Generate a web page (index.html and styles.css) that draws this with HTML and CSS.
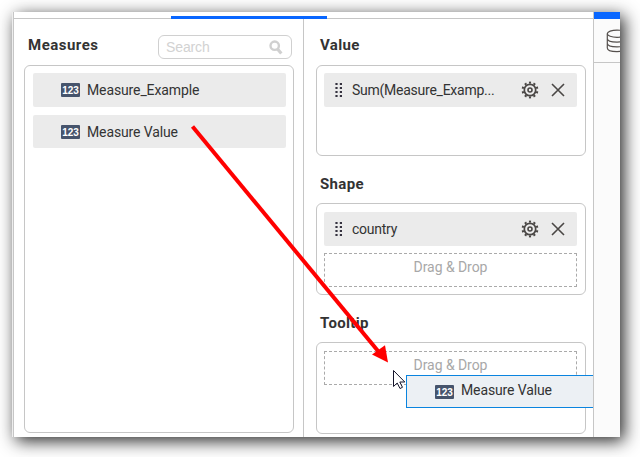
FILE: index.html
```html
<!DOCTYPE html>
<html lang="en">
<head>
<meta charset="utf-8">
<title>Data fields</title>
<link rel="stylesheet" href="styles.css">
</head>
<body>
<svg class="defs" width="0" height="0">
  <symbol id="gear" viewBox="0 0 18 18">
    <g fill="none" stroke="#4a4745">
      <circle cx="9" cy="9" r="5.7" stroke-width="1.7"/>
      <circle cx="9" cy="9" r="2" stroke-width="1.6"/>
      <circle cx="9" cy="9" r="7.4" stroke-width="2" pathLength="100" stroke-dasharray="4.5 5.5" stroke-dashoffset="2.25" transform="rotate(-90 9 9)"/>
    </g>
  </symbol>
  <symbol id="close" viewBox="0 0 14 14"><path d="M1 1l12 12M13 1L1 13" fill="none" stroke="#4a4745" stroke-width="1.6"/></symbol>
  <symbol id="grip" viewBox="0 0 7 14"><path d="M1.500 0v14M5.900 0v14" fill="none" stroke="#35323f" stroke-width="2.200" stroke-dasharray="2"/></symbol>
</svg>
<div class="window">
  <main class="main">
    <div class="tabs"><i class="active-tab"></i></div>
    <div class="columns">
      <section class="measures">
        <header class="measures-head">
          <h2>Measures</h2>
          <div class="search"><span>Search</span>
            <svg width="14" height="15" viewBox="0 0 14 15"><circle cx="5.700" cy="5.700" r="4.200" fill="none" stroke="#d0d0d0" stroke-width="2.400"/><path d="M8.300 8.800l4 4.700" stroke="#d0d0d0" stroke-width="3.200"/></svg>
          </div>
        </header>
        <div class="box list">
          <div class="item"><b class="badge">123</b>Measure_Example</div>
          <div class="item second"><b class="badge">123</b>Measure Value</div>
        </div>
      </section>
      <section class="fields">
        <h2>Value</h2>
        <div class="box value">
          <div class="field"><svg class="grip"><use href="#grip"/></svg><span>Sum(Measure_Examp...</span><svg class="gear"><use href="#gear"/></svg><svg class="close"><use href="#close"/></svg></div>
        </div>
        <h2>Shape</h2>
        <div class="box shape">
          <div class="field"><svg class="grip"><use href="#grip"/></svg><span>country</span><svg class="gear"><use href="#gear"/></svg><svg class="close"><use href="#close"/></svg></div>
          <div class="drop">Drag &amp; Drop</div>
        </div>
        <h2>Tooltip</h2>
        <div class="box tooltip">
          <div class="drop">Drag &amp; Drop</div>
        </div>
        <div class="dragged"><b class="badge">123</b><span>Measure Value</span></div>
      </section>
    </div>
  </main>
  <aside class="rail">
    <i class="rail-top"></i>
    <div class="rail-button">
      <svg width="22" height="24" viewBox="0 0 22 24"><g fill="none" stroke="#55504d" stroke-width="1.200"><ellipse cx="11" cy="4.700" rx="9.700" ry="3.600"/><path d="M1.300 4.700v14.300c0 4.800 19.400 4.800 19.400 0v-14.300M1.300 9.500c0 4.800 19.400 4.800 19.400 0M1.300 14.300c0 4.800 19.400 4.800 19.400 0"/></g></svg>
    </div>
  </aside>
</div>
<svg class="overlay" width="640" height="457">
  <path d="M192.500 126.500L378 351" stroke="#f00" stroke-width="4"/>
  <path d="M388 362.500L372 354.500L385 345.200z" fill="#f00"/>
  <path d="M393.500 370.500v16l3.700-3.500 2.800 5.500 2.500-1.200-2.700-5.300h5z" fill="#fff" stroke="#15152b"/>
</svg>
</body>
</html>
```
FILE: styles.css
```css
* { box-sizing: border-box; }
body { margin: 0; width: 640px; height: 457px; overflow: hidden; background: #fff; font: 14px/18px Roboto, "Liberation Sans", sans-serif; letter-spacing: -.12px; color: #333; padding: 12px 20px 20px 12px; }
.defs { position: absolute; }
.window { width: 608px; height: 425px; display: flex; background: #fff; border-left: 1px solid #eee; box-shadow: 4px 4px 16px rgba(0,0,0,.85); }
.main { width: 581px; border-left: 1px solid #c6c6c6; border-right: 1px solid #c6c6c6; overflow: hidden; }
.tabs { height: 7px; border-bottom: 1px solid #c6c6c6; padding: 4px 0 0 157px; }
.active-tab { display: block; width: 156px; height: 3px; background: #0866ff; position: relative; }
.columns { display: flex; height: 418px; }
.measures { width: 290px; border-right: 1px solid #c6c6c6; padding: 16px 9px 0 10px; }
.measures-head { display: flex; justify-content: space-between; height: 30px; }
h2 { margin: 0; font-size: 15px; line-height: 20px; font-weight: 700; letter-spacing: .5px; height: 30px; padding-left: 4px; color: #333; }
.search { width: 134px; height: 24px; margin-right: 2px; border: 1px solid #d0d0d0; border-radius: 6px; padding: 0 8px 0 7px; display: flex; align-items: center; justify-content: space-between; color: #d2d2d2; font: 14px "Liberation Sans", sans-serif; }
.box { border: 1px solid #c6c6c6; border-radius: 6px; width: 270px; padding: 7px 8px; height: 92px; }
.list { height: 368px; padding: 7px 7px 7px 8px; }
.item { width: 253px; height: 34px; margin-bottom: 8px; background: #ebebeb; border-radius: 2px; display: flex; align-items: center; padding-left: 28px; }
.item.second { height: 33px; }
.badge { width: 19px; height: 14px; margin-right: 7px; background: #46546c; border-radius: 1px; color: #fff; font: bold 10px/15px "Liberation Sans", sans-serif; letter-spacing: 0; text-align: center; }
.fields { width: 289px; position: relative; padding: 16px 0 0 12px; }
.fields h2 { letter-spacing: .35px; }
.fields .box { padding-left: 7px; }
.fields .value { height: 91px; }
.fields .box + h2 { margin-top: 18px; height: 29px; }
.fields .shape, .fields .tooltip { padding-top: 8px; }
.field { width: 253px; height: 34px; background: #ebebeb; border-radius: 2px; display: flex; align-items: center; padding: 0 12px 0 11px; }
.field span { flex: 1; padding-left: 10px; letter-spacing: -.25px; }
.grip { width: 7px; height: 14px; }
.gear { width: 18px; height: 18px; margin: -1px 12px 0 0; }
.close { width: 14px; height: 14px; }
.drop { width: 253px; height: 34px; border: 1px dashed #aaa; color: #a8a8a8; text-align: center; line-height: 27px; letter-spacing: -.05px; }
.field + .drop { margin-top: 7px; }
.dragged { position: absolute; left: 102px; top: 356px; width: 200px; height: 33px; background: #ecf0f4; border: 1px solid #0a84df; padding: 5px 0 0 28px; display: flex; }
.dragged .badge { margin-top: 4px; }
.rail { width: 26px; background: #fbfbfb; overflow: hidden; }
.rail-top { display: block; height: 7px; background: #0866ff; }
.rail-button { height: 44px; border-bottom: 1px solid #c6c6c6; padding: 10px 0 0 12px; }
.overlay { position: absolute; left: 0; top: 0; }
```
